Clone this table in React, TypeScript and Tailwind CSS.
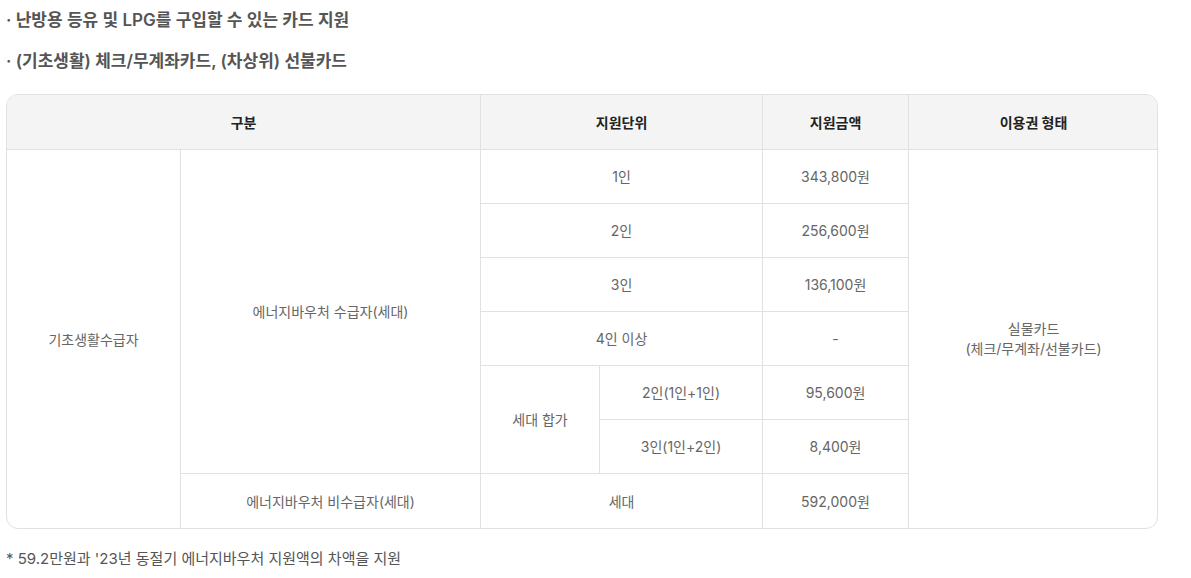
import React from 'react'

// Card support table: fuel vouchers by household type

const FONT = "font-['Inter','Noto_Sans_CJK_KR',sans-serif]"

const th = 'border border-[#e1e1e1] bg-[#f4f4f4] text-[14px] font-bold text-[#222] text-center align-middle'
const td = 'border border-[#e1e1e1] text-[14px] text-[#666] text-center align-middle'

export default function App() {
  return (
    <div className={`${FONT} w-[1191px] h-[578px] bg-white`}>
      <ul className="px-[6px] text-[17px] font-semibold text-[#555]">
        <li className="h-[41px] flex items-center">· 난방용 등유 및 LPG를 구입할 수 있는 카드 지원</li>
        <li className="h-[41px] flex items-center">· (기초생활) 체크/무계좌카드, (차상위) 선불카드</li>
      </ul>

      <div className="ml-[6px] mt-[12px] w-[1152px] rounded-[12px] border border-[#e1e1e1] overflow-hidden">
        <table className="-m-px w-[1152px] table-fixed border-collapse">
          <colgroup>
            <col className="w-[174px]" />
            <col className="w-[300px]" />
            <col className="w-[119px]" />
            <col className="w-[163px]" />
            <col className="w-[146px]" />
            <col className="w-[250px]" />
          </colgroup>
          <thead>
            <tr className="h-[55px]">
              <th colSpan={2} className={th}>구분</th>
              <th colSpan={2} className={th}>지원단위</th>
              <th className={th}>지원금액</th>
              <th className={th}>이용권 형태</th>
            </tr>
          </thead>
          <tbody>
            <tr className="h-[54px]">
              <td rowSpan={7} className={td}>기초생활수급자</td>
              <td rowSpan={6} className={td}>에너지바우처 수급자(세대)</td>
              <td colSpan={2} className={td}>1인</td>
              <td className={td}>343,800원</td>
              <td rowSpan={7} className={`${td} leading-[20px]`}>
                실물카드
                <br />
                (체크/무계좌/선불카드)
              </td>
            </tr>
            <tr className="h-[54px]">
              <td colSpan={2} className={td}>2인</td>
              <td className={td}>256,600원</td>
            </tr>
            <tr className="h-[54px]">
              <td colSpan={2} className={td}>3인</td>
              <td className={td}>136,100원</td>
            </tr>
            <tr className="h-[54px]">
              <td colSpan={2} className={td}>4인 이상</td>
              <td className={td}>-</td>
            </tr>
            <tr className="h-[54px]">
              <td rowSpan={2} className={td}>세대 합가</td>
              <td className={td}>2인(1인+1인)</td>
              <td className={td}>95,600원</td>
            </tr>
            <tr className="h-[54px]">
              <td className={td}>3인(1인+2인)</td>
              <td className={td}>8,400원</td>
            </tr>
            <tr className="h-[55px]">
              <td className={td}>에너지바우처 비수급자(세대)</td>
              <td colSpan={2} className={td}>세대</td>
              <td className={td}>592,000원</td>
            </tr>
          </tbody>
        </table>
      </div>

      <p className="mt-[19px] px-[6px] text-[15px] text-[#555]">
        * 59.2만원과 '23년 동절기 에너지바우처 지원액의 차액을 지원
      </p>
    </div>
  )
}
